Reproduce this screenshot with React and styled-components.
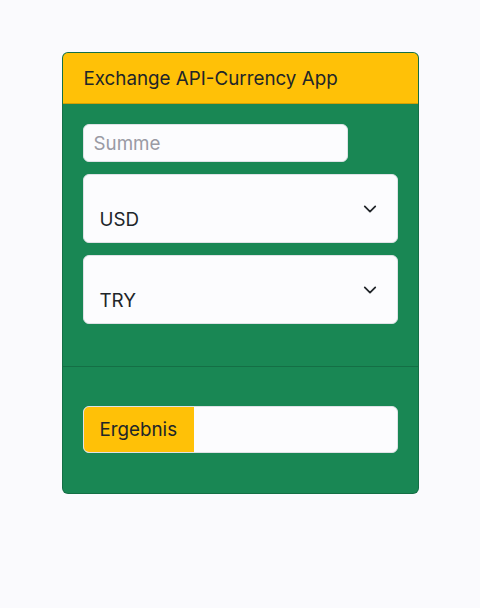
import React from "react";
import styled, { createGlobalStyle } from "styled-components";

const GlobalStyle = createGlobalStyle`
  body {
    margin: 0;
    background: #fafafd;
    font-family: Inter, "Liberation Sans", sans-serif;
    color: #212529;
  }
`;

const Page = styled.div`
  padding-top: 52px;
  display: flex;
  justify-content: center;
`;

const Card = styled.div`
  width: 357px;
  background: #198754;
  border: 1px solid rgba(0, 0, 0, 0.175);
  border-radius: 6px;
  overflow: hidden;
  box-sizing: border-box;
`;

const Header = styled.div`
  height: 51px;
  background: #ffc107;
  border-bottom: 1px solid rgba(0, 0, 0, 0.175);
  display: flex;
  align-items: center;
  padding: 0 21px;
  font-size: 18.8px;
  box-sizing: border-box;
`;

const Body = styled.div`
  padding: 20px 20px 42px;
  display: flex;
  flex-direction: column;
  gap: 12px;
`;

const AmountInput = styled.input`
  width: 265px;
  height: 38px;
  box-sizing: border-box;
  border: 1px solid #dee2e6;
  border-radius: 6px;
  background: #fcfcfe;
  padding: 0 10px;
  font: inherit;
  font-size: 18.8px;
  &::placeholder {
    color: #9a9aa4;
  }
`;

const Select = styled.div`
  height: 69px;
  box-sizing: border-box;
  border: 1px solid #dee2e6;
  border-radius: 6px;
  background: #fcfcfe;
  display: flex;
  justify-content: space-between;
  padding: 26px 20px 0 16px;
  font-size: 18.8px;
`;

const Value = styled.span`
  padding-top: 7px;
`;

const Chevron = styled.svg`
  width: 14px;
  height: 14px;
  margin-top: 1px;
`;

const Footer = styled.div`
  border-top: 1px solid rgba(0, 0, 0, 0.175);
  padding: 39px 20px 40px;
`;

const Group = styled.div`
  height: 47px;
  display: flex;
  border: 1px solid #dee2e6;
  border-radius: 6px;
  overflow: hidden;
  box-sizing: border-box;
  background: #fcfcfe;
`;

const Label = styled.div`
  width: 110px;
  background: #ffc107;
  display: flex;
  align-items: center;
  padding-left: 16px;
  box-sizing: border-box;
  font-size: 18.8px;
`;

const CurrencySelect = ({ value }) => (
  <Select>
    <Value>{value}</Value>
    <Chevron viewBox="0 0 16 16" fill="none" stroke="#212529" strokeWidth="2" strokeLinecap="round" strokeLinejoin="round">
      <path d="M2 5l6 6 6-6" />
    </Chevron>
  </Select>
);

export default function App() {
  return (
    <>
      <GlobalStyle />
      <Page>
        <Card>
          <Header>Exchange API-Currency App</Header>
          <Body>
            <AmountInput placeholder="Summe" />
            <CurrencySelect value="USD" />
            <CurrencySelect value="TRY" />
          </Body>
          <Footer>
            <Group>
              <Label>Ergebnis</Label>
            </Group>
          </Footer>
        </Card>
      </Page>
    </>
  );
}
